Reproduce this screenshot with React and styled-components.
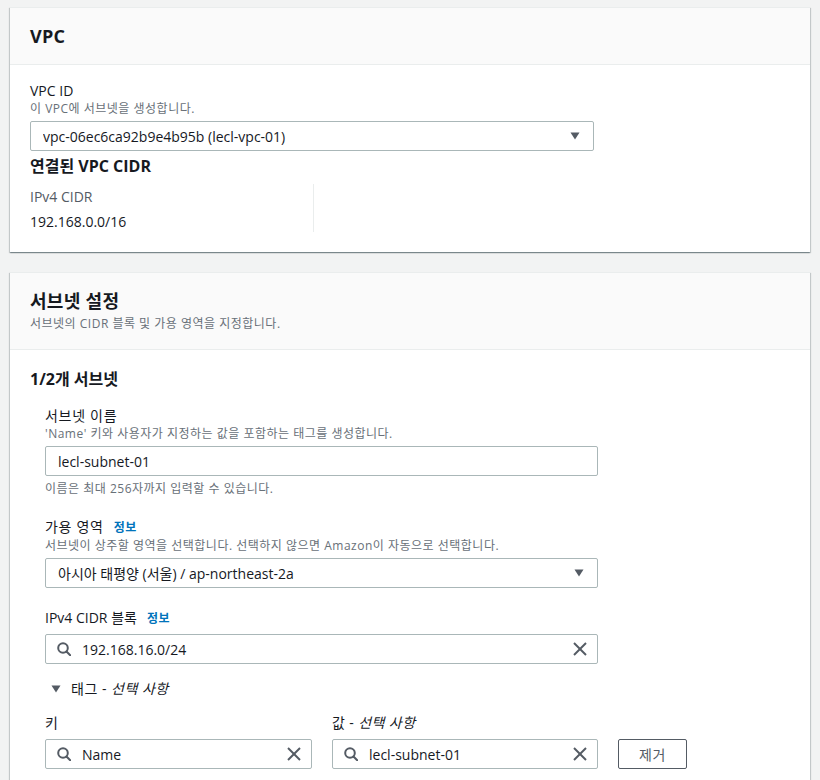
import styled, { createGlobalStyle } from "styled-components";

const GlobalStyle = createGlobalStyle`
    body {
        margin: 0;
        background: #f2f3f3;
        font-family: "Open Sans", "Noto Sans CJK KR", sans-serif;
        color: #16191f;
    }
`;

const Page = styled.div`
    display: flex;
    flex-direction: column;
    gap: 20px;
    padding: 7px 10px 40px 10px;
`;

const Card = styled.section`
    background: #fff;
    border-top: 1px solid #eaeded;
    box-shadow: 0 1px 1px 0 rgba(0, 28, 36, 0.3),
        1px 1px 1px 0 rgba(0, 28, 36, 0.15),
        -1px 1px 1px 0 rgba(0, 28, 36, 0.15);
`;

const CardHeader = styled.header`
    background: #fafafa;
    border-bottom: 1px solid #eaeded;
    padding: 17px 20px;
`;

const CardTitle = styled.h2`
    margin: 0;
    font-size: 18px;
    line-height: 22px;
    font-weight: 700;
    letter-spacing: 0.3px;
`;

const CardDesc = styled.p`
    margin: 4px 0 0;
    font-size: 12px;
    line-height: 16px;
    color: #687078;
    letter-spacing: 0.5px;
`;

const CardBody = styled.div`
    padding: ${(p) => p.$top || 16}px 20px ${(p) => p.$bottom || 20}px;
`;

const SubTitle = styled.h3`
    margin: ${(p) => p.$top || 0}px 0 0;
    font-size: 16px;
    line-height: 20px;
    font-weight: 700;
`;

const Label = styled.div`
    display: flex;
    align-items: baseline;
    gap: 10px;
    font-size: 14px;
    line-height: 20px;
    letter-spacing: ${(p) => (p.$ko ? 0.7 : 0)}px;
`;

const InfoLink = styled.a`
    font-size: 12px;
    font-weight: 700;
    color: #0073bb;
    text-decoration: none;
    letter-spacing: 0.5px;
`;

const Desc = styled.div`
    font-size: 12px;
    line-height: 16px;
    color: #687078;
    letter-spacing: 0.5px;
`;

const Hint = styled(Desc)`
    margin-top: 5px;
`;

const Box = styled.div`
    box-sizing: border-box;
    display: flex;
    align-items: center;
    width: ${(p) => p.$width || 553}px;
    height: 30px;
    margin-top: ${(p) => p.$top || 4}px;
    padding: 0 ${(p) => (p.$icon ? 10 : 13)}px 0 ${(p) => (p.$icon ? 11 : 12)}px;
    border: 1px solid #aab7b8;
    border-radius: 2px;
    background: #fff;
    font-size: 14px;
`;

const BoxText = styled.span`
    flex: 1;
    margin-left: ${(p) => (p.$icon ? 11 : 0)}px;
    white-space: nowrap;
    overflow: hidden;
`;

const CidrColumn = styled.div`
    width: 283px;
    margin-top: 8px;
    padding-top: 3px;
    border-right: 1px solid #eaeded;
`;

const CidrKey = styled.div`
    font-size: 14px;
    line-height: 20px;
    color: #545b64;
`;

const CidrValue = styled.div`
    margin-top: 5px;
    font-size: 14px;
    line-height: 20px;
`;

const Fields = styled.div`
    display: flex;
    flex-direction: column;
    gap: 20px;
    margin-top: 17px;
    padding-left: 15px;
`;

const Field = styled.div`
    display: flex;
    flex-direction: column;
`;

const TagToggle = styled.div`
    display: flex;
    align-items: center;
    gap: 10px;
    margin-top: -5px;
    padding-left: 6px;
    font-size: 14px;
    line-height: 20px;
    letter-spacing: 0.5px;
    color: #16191f;

    em {
        font-style: italic;
    }
`;

const TagGrid = styled.div`
    display: grid;
    grid-template-columns: 267px 266px 69px;
    column-gap: 20px;
    margin-top: -6px;
`;

const TagLabel = styled.div`
    font-size: 14px;
    line-height: 20px;
    letter-spacing: 0.4px;

    em {
        font-style: italic;
    }
`;

const RemoveButton = styled.button`
    box-sizing: border-box;
    height: 30px;
    margin-top: 26px;
    border: 1px solid #545b64;
    border-radius: 2px;
    background: #fff;
    color: #545b64;
    font-family: inherit;
    font-size: 14px;
    letter-spacing: 0.5px;
    cursor: pointer;
`;

const Caret = () => (
    <svg width="10" height="8" viewBox="0 0 10 8">
        <path d="M0.5 0.5 H9.5 L5 7.5 Z" fill="#545b64" />
    </svg>
);

const SearchIcon = () => (
    <svg width="14" height="14" viewBox="0 0 14 14" fill="none" stroke="#545b64" strokeWidth="2">
        <circle cx="6" cy="6" r="4.8" />
        <line x1="9.5" y1="9.5" x2="13.2" y2="13.2" strokeLinecap="round" />
    </svg>
);

const ClearIcon = () => (
    <svg width="14" height="14" viewBox="0 0 14 14" fill="none" stroke="#545b64" strokeWidth="2">
        <line x1="1" y1="1" x2="13" y2="13" />
        <line x1="13" y1="1" x2="1" y2="13" />
    </svg>
);

function SearchInput({ value, width, top }) {
    return (
        <Box $icon $width={width} $top={top}>
            <SearchIcon />
            <BoxText $icon>{value}</BoxText>
            <ClearIcon />
        </Box>
    );
}

export default function App() {
    return (
        <>
            <GlobalStyle />
            <Page>
                <Card>
                    <CardHeader>
                        <CardTitle>VPC</CardTitle>
                    </CardHeader>
                    <CardBody>
                        <Label>VPC ID</Label>
                        <Desc>이 VPC에 서브넷을 생성합니다.</Desc>
                        <Box $width={564}>
                            <BoxText>vpc-06ec6ca92b9e4b95b (lecl-vpc-01)</BoxText>
                            <Caret />
                        </Box>
                        <SubTitle $top={5}>연결된 VPC CIDR</SubTitle>
                        <CidrColumn>
                            <CidrKey>IPv4 CIDR</CidrKey>
                            <CidrValue>192.168.0.0/16</CidrValue>
                        </CidrColumn>
                    </CardBody>
                </Card>

                <Card>
                    <CardHeader>
                        <CardTitle>서브넷 설정</CardTitle>
                        <CardDesc>서브넷의 CIDR 블록 및 가용 영역을 지정합니다.</CardDesc>
                    </CardHeader>
                    <CardBody $top={19} $bottom={40}>
                        <SubTitle>1/2개 서브넷</SubTitle>
                        <Fields>
                            <Field>
                                <Label $ko>서브넷 이름</Label>
                                <Desc>'Name' 키와 사용자가 지정하는 값을 포함하는 태그를 생성합니다.</Desc>
                                <Box>
                                    <BoxText>lecl-subnet-01</BoxText>
                                </Box>
                                <Hint>이름은 최대 256자까지 입력할 수 있습니다.</Hint>
                            </Field>
                            <Field>
                                <Label $ko>
                                    가용 영역 <InfoLink href="#">정보</InfoLink>
                                </Label>
                                <Desc>서브넷이 상주할 영역을 선택합니다. 선택하지 않으면 Amazon이 자동으로 선택합니다.</Desc>
                                <Box>
                                    <BoxText>아시아 태평양 (서울) / ap-northeast-2a</BoxText>
                                    <Caret />
                                </Box>
                            </Field>
                            <Field>
                                <Label>
                                    IPv4 CIDR 블록 <InfoLink href="#">정보</InfoLink>
                                </Label>
                                <SearchInput value="192.168.16.0/24" top={5} />
                            </Field>
                            <TagToggle>
                                <Caret />
                                <span>
                                    태그 - <em>선택 사항</em>
                                </span>
                            </TagToggle>
                            <TagGrid>
                                <div>
                                    <TagLabel>키</TagLabel>
                                    <SearchInput value="Name" width={267} top={6} />
                                </div>
                                <div>
                                    <TagLabel>
                                        값 - <em>선택 사항</em>
                                    </TagLabel>
                                    <SearchInput value="lecl-subnet-01" width={266} top={6} />
                                </div>
                                <RemoveButton>제거</RemoveButton>
                            </TagGrid>
                        </Fields>
                    </CardBody>
                </Card>
            </Page>
        </>
    );
}
